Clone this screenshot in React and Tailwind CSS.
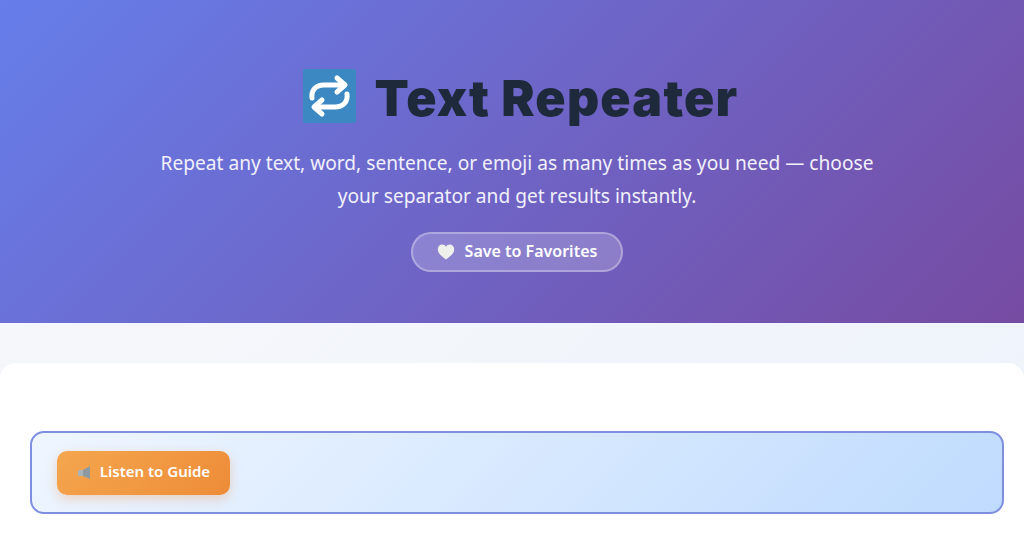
import React from 'react'

const RepeatEmoji = () => (
  <svg width="53" height="54" viewBox="0 0 53 54" className="shrink-0">
    <rect width="53" height="54" rx="2" fill="#3b88c3" />
    <path
      d="M9 29 C8 21 13 16 21 16 H40"
      fill="none"
      stroke="#fff"
      strokeWidth="5"
      strokeLinecap="round"
    />
    <path
      d="M34 9 L42 16 L34 23"
      fill="none"
      stroke="#fff"
      strokeWidth="5"
      strokeLinecap="round"
      strokeLinejoin="round"
    />
    <path
      d="M44 25 C45 33 40 38 32 38 H13"
      fill="none"
      stroke="#fff"
      strokeWidth="5"
      strokeLinecap="round"
    />
    <path
      d="M19 31 L11 38 L19 45"
      fill="none"
      stroke="#fff"
      strokeWidth="5"
      strokeLinecap="round"
      strokeLinejoin="round"
    />
  </svg>
)

const App = () => {
  return (
    <div className="h-[538px] overflow-hidden bg-white font-['Noto_Sans',sans-serif]">
      {/* Hero */}
      <header className="h-[323px] bg-[linear-gradient(135deg,#667eea_0%,#764ba2_100%)] pt-[69px] pl-[10px] flex flex-col items-center">
        <div className="flex items-center gap-[19px] h-[54px] ml-[7px]">
          <RepeatEmoji />
          <h1 className="font-['Inter',sans-serif] text-[50px] leading-[58px] pt-[4px] tracking-[1.2px] font-black text-[#1e293b]">Text Repeater</h1>
        </div>
        <p className="mt-[24px] w-[760px] text-center text-[19.15px] leading-[33px] text-[#f1f0fb]">
          Repeat any text, word, sentence, or emoji as many times as you need — choose
          <br />
          your separator and get results instantly.
        </p>
        <button className="mt-[19px] h-[40px] w-[212px] flex items-center justify-center gap-[10px] rounded-full border-2 border-white/30 bg-white/20 text-white text-[16px] leading-[20px] pb-[3px] font-semibold">
          <svg width="18" height="16" viewBox="0 0 18 16" className="mt-[3px]">
            <path
              d="M9 15.5 C5 12.5 .8 9.5 .8 5.2 C.8 2.4 2.9 .6 5.2 .6 C6.9 .6 8.2 1.5 9 2.8 C9.8 1.5 11.1 .6 12.8 .6 C15.1 .6 17.2 2.4 17.2 5.2 C17.2 9.5 13 12.5 9 15.5 Z"
              fill="#eef0ec"
            />
          </svg>
          Save to Favorites
        </button>
      </header>

      {/* Page body */}
      <div className="pt-[40px] bg-[linear-gradient(135deg,#f5f7fa_0%,#eef3fb_100%)]">
        <main className="bg-white rounded-t-[16px] pl-[30px] pr-[20px] pt-[68px] pb-[24px]">
          <div className="h-[83px] rounded-[14px] border-2 border-[#7f8fe0] bg-[linear-gradient(135deg,#eff6ff_0%,#bfdbfe_100%)] flex items-center pl-[25px]">
            <button className="h-[44px] w-[173px] flex items-center justify-center gap-[7px] rounded-[10px] bg-[linear-gradient(135deg,#f4a64e_0%,#ee8c38_100%)] text-white text-[15px] leading-[20px] pb-[3px] font-semibold shadow-[0_4px_12px_rgba(237,137,54,0.3)]">
              <svg width="16" height="15" viewBox="0 0 16 15" className="mt-[3px]">
                <rect x="1" y="5" width="5" height="6" fill="#a9b3b8" />
                <path d="M6 5 L13 1 V14 L6 11 Z" fill="#8d9aa2" />
              </svg>
              Listen to Guide
            </button>
          </div>
        </main>
      </div>
    </div>
  )
}

export default App
